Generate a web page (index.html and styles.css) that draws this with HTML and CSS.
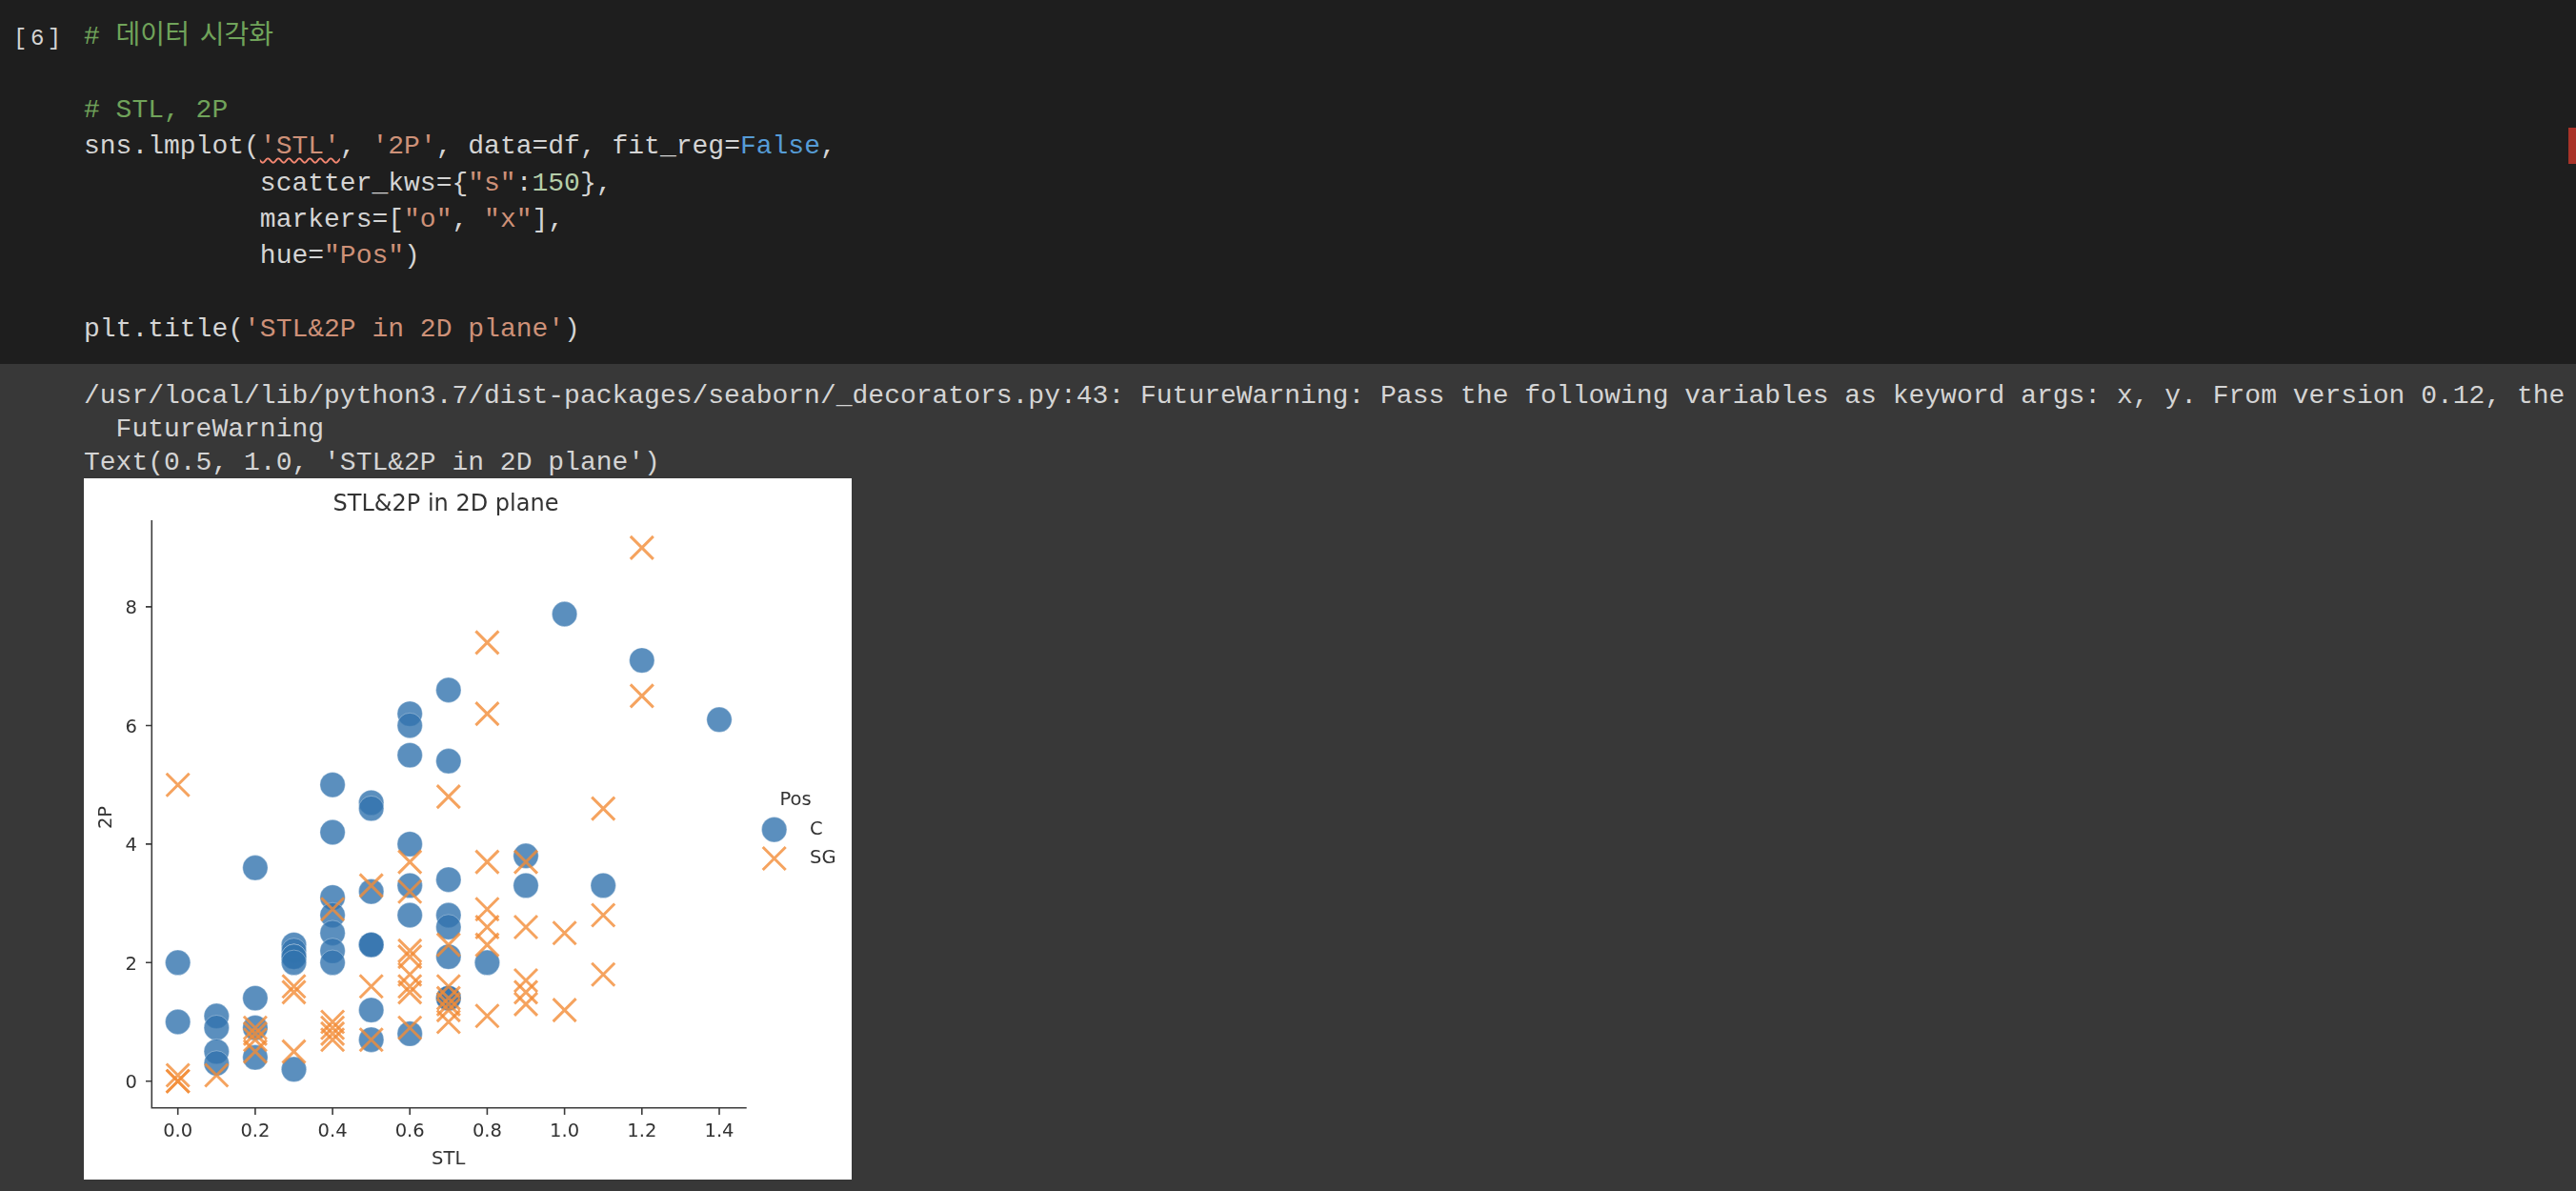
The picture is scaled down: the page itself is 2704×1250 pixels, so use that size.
FILE: index.html
```html
<!DOCTYPE html>
<html lang="ko">
<head>
<meta charset="utf-8">
<title>Notebook cell</title>
<link rel="stylesheet" href="styles.css">
</head>
<body>
<main class="cell">
  <section class="input">
    <div class="gutter">[6]</div>
    <pre class="code"><span class="cm"># <span class="ko">데이터 시각화</span></span>

<span class="cm"># STL, 2P</span>
sns.lmplot(<span class="str squiggle">'STL'</span>, <span class="str">'2P'</span>, data=df, fit_reg=<span class="kw">False</span>,
           scatter_kws={<span class="str">"s"</span>:<span class="num">150</span>},
           markers=[<span class="str">"o"</span>, <span class="str">"x"</span>],
           hue=<span class="str">"Pos"</span>)

plt.title(<span class="str">'STL&amp;2P in 2D plane'</span>)</pre>
    <div class="marker"></div>
  </section>
  <section class="output">
    <pre class="stream">/usr/local/lib/python3.7/dist-packages/seaborn/_decorators.py:43: FutureWarning: Pass the following variables as keyword args: x, y. From version 0.12, the
  FutureWarning
Text(0.5, 1.0, 'STL&amp;2P in 2D plane')</pre>
    <svg class="plot" width="806" height="736" viewBox="0 0 806 736" xmlns="http://www.w3.org/2000/svg">
      <defs>
        <path id="x" class="xm" d="M-12-12L12 12M-12 12L12-12"/>
      </defs>
      <rect class="bg" width="806" height="736"/>
      <text class="t title" x="380" y="34">STL&amp;2P in 2D plane</text>

      <path class="axis" d="M71.3 44V660.7H695.7"/>
      <path class="tick" d="M65 632.7H71.3M65 508.3H71.3M65 383.9H71.3M65 259.5H71.3M65 134.9H71.3M98.7 660.7V668M179.9 660.7V668M261.1 660.7V668M342.2 660.7V668M423.4 660.7V668M504.6 660.7V668M585.8 660.7V668M667 660.7V668"/>

      <g class="t ylab">
        <text x="56" y="640">0</text><text x="56" y="516">2</text><text x="56" y="391">4</text><text x="56" y="267">6</text><text x="56" y="142">8</text>
      </g>
      <g class="t xlab">
        <text x="98.7" y="691">0.0</text><text x="179.9" y="691">0.2</text><text x="261.1" y="691">0.4</text><text x="342.2" y="691">0.6</text><text x="423.4" y="691">0.8</text><text x="504.6" y="691">1.0</text><text x="585.8" y="691">1.2</text><text x="667" y="691">1.4</text>
      </g>
      <text class="t axl" x="382.7" y="720">STL</text>
      <text class="t axl" transform="translate(29 356) rotate(-90)">2P</text>

      <g class="dots">
        <circle r="13.2" cx="98.7" cy="508.3"/><circle r="13.2" cx="98.7" cy="570.5"/>
        <circle r="13.2" cx="139.3" cy="564.3"/><circle r="13.2" cx="139.3" cy="576.7"/><circle r="13.2" cx="139.3" cy="601.6"/><circle r="13.2" cx="139.3" cy="614"/>
        <circle r="13.2" cx="179.9" cy="408.8"/><circle r="13.2" cx="179.9" cy="545.6"/><circle r="13.2" cx="179.9" cy="576.7"/><circle r="13.2" cx="179.9" cy="607.8"/>
        <circle r="13.2" cx="220.5" cy="489.6"/><circle r="13.2" cx="220.5" cy="495.9"/><circle r="13.2" cx="220.5" cy="502.1"/><circle r="13.2" cx="220.5" cy="502.1"/><circle r="13.2" cx="220.5" cy="508.3"/><circle r="13.2" cx="220.5" cy="620.3"/>
        <circle r="13.2" cx="261.1" cy="321.7"/><circle r="13.2" cx="261.1" cy="371.5"/><circle r="13.2" cx="261.1" cy="439.9"/><circle r="13.2" cx="261.1" cy="458.5"/><circle r="13.2" cx="261.1" cy="477.2"/><circle r="13.2" cx="261.1" cy="495.9"/><circle r="13.2" cx="261.1" cy="508.3"/>
        <circle r="13.2" cx="301.7" cy="340.4"/><circle r="13.2" cx="301.7" cy="346.6"/><circle r="13.2" cx="301.7" cy="433.7"/><circle r="13.2" cx="301.7" cy="489.6"/><circle r="13.2" cx="301.7" cy="489.6"/><circle r="13.2" cx="301.7" cy="558.1"/><circle r="13.2" cx="301.7" cy="589.2"/>
        <circle r="13.2" cx="342.2" cy="247.1"/><circle r="13.2" cx="342.2" cy="259.5"/><circle r="13.2" cx="342.2" cy="290.6"/><circle r="13.2" cx="342.2" cy="383.9"/><circle r="13.2" cx="342.2" cy="427.4"/><circle r="13.2" cx="342.2" cy="458.5"/><circle r="13.2" cx="342.2" cy="582.9"/>
        <circle r="13.2" cx="382.8" cy="222.2"/><circle r="13.2" cx="382.8" cy="296.8"/><circle r="13.2" cx="382.8" cy="421.2"/><circle r="13.2" cx="382.8" cy="458.5"/><circle r="13.2" cx="382.8" cy="471"/><circle r="13.2" cx="382.8" cy="502.1"/><circle r="13.2" cx="382.8" cy="545.6"/><circle r="13.2" cx="382.8" cy="545.6"/>
        <circle r="13.2" cx="423.4" cy="508.3"/>
        <circle r="13.2" cx="464" cy="396.3"/><circle r="13.2" cx="464" cy="427.4"/>
        <circle r="13.2" cx="504.6" cy="142.5"/>
        <circle r="13.2" cx="545.2" cy="427.4"/>
        <circle r="13.2" cx="585.8" cy="191.1"/>
        <circle r="13.2" cx="667" cy="253.3"/>
        <circle r="13.2" cx="724.7" cy="368.7"/>
      </g>

      <g class="crosses">
        <use href="#x" x="98.7" y="321.7"/><use href="#x" x="98.7" y="626.5"/><use href="#x" x="98.7" y="632.7"/><use href="#x" x="98.7" y="632.7"/>
        <use href="#x" x="139.3" y="626.5"/>
        <use href="#x" x="179.9" y="576.7"/><use href="#x" x="179.9" y="582.9"/><use href="#x" x="179.9" y="589.2"/><use href="#x" x="179.9" y="601.6"/>
        <use href="#x" x="220.5" y="533.2"/><use href="#x" x="220.5" y="539.4"/><use href="#x" x="220.5" y="601.6"/>
        <use href="#x" x="261.1" y="452.3"/><use href="#x" x="261.1" y="570.5"/><use href="#x" x="261.1" y="576.7"/><use href="#x" x="261.1" y="582.9"/><use href="#x" x="261.1" y="589.2"/>
        <use href="#x" x="301.7" y="427.4"/><use href="#x" x="301.7" y="533.2"/><use href="#x" x="301.7" y="589.2"/>
        <use href="#x" x="342.2" y="402.6"/><use href="#x" x="342.2" y="433.7"/><use href="#x" x="342.2" y="495.9"/><use href="#x" x="342.2" y="502.1"/><use href="#x" x="342.2" y="520.7"/><use href="#x" x="342.2" y="533.2"/><use href="#x" x="342.2" y="539.4"/><use href="#x" x="342.2" y="576.7"/>
        <use href="#x" x="382.8" y="334.1"/><use href="#x" x="382.8" y="489.6"/><use href="#x" x="382.8" y="533.2"/><use href="#x" x="382.8" y="545.6"/><use href="#x" x="382.8" y="551.9"/><use href="#x" x="382.8" y="558.1"/><use href="#x" x="382.8" y="570.5"/>
        <use href="#x" x="423.4" y="172.4"/><use href="#x" x="423.4" y="247.1"/><use href="#x" x="423.4" y="402.6"/><use href="#x" x="423.4" y="452.3"/><use href="#x" x="423.4" y="471"/><use href="#x" x="423.4" y="489.6"/><use href="#x" x="423.4" y="564.3"/>
        <use href="#x" x="464" y="402.6"/><use href="#x" x="464" y="471"/><use href="#x" x="464" y="527"/><use href="#x" x="464" y="539.4"/><use href="#x" x="464" y="551.9"/>
        <use href="#x" x="504.6" y="477.2"/><use href="#x" x="504.6" y="558.1"/>
        <use href="#x" x="545.2" y="346.6"/><use href="#x" x="545.2" y="458.5"/><use href="#x" x="545.2" y="520.7"/>
        <use href="#x" x="585.8" y="72.9"/><use href="#x" x="585.8" y="228.4"/>
        <use href="#x" x="724.7" y="399"/>
      </g>

      <text class="t leg" x="747" y="343">Pos</text>
      <text class="t" x="762" y="374">C</text>
      <text class="t" x="762" y="404">SG</text>
    </svg>
  </section>
</main>
</body>
</html>
```
FILE: styles.css
```css
html, body {
  margin: 0;
  height: 100%;
  overflow: hidden;
  background: #383838;
}

.cell {
  display: flex;
  flex-direction: column;
}

pre {
  margin: 0;
  font-family: "Liberation Mono", monospace;
  font-size: 28px;
}

.input {
  position: relative;
  display: flex;
  height: 382px;
  box-sizing: border-box;
  background: #1e1e1e;
  color: #d4d4d4;
}

.gutter {
  width: 88px;
  box-sizing: border-box;
  padding: 24px 0 0 14px;
  font: 24px/34px "Liberation Mono", monospace;
  letter-spacing: 3.5px;
  color: #d4d4d4;
}

.code {
  padding-top: 15px;
  line-height: 38.4px;
}

.cm { color: #70a35a; }
.ko {
  font-family: "Noto Sans CJK KR", sans-serif;
  word-spacing: 3px;
}
.str { color: #ce9178; }
.kw { color: #569cd6; }
.num { color: #b5cea8; }

.squiggle {
  text-decoration: underline wavy #f48771;
  text-decoration-thickness: 1.5px;
  text-underline-offset: 4px;
}

.marker {
  position: absolute;
  top: 134px;
  right: 0;
  width: 8px;
  height: 38px;
  background: #a93228;
}

.output {
  padding: 16px 0 0 88px;
  color: #d4d4d4;
}

.stream {
  line-height: 35px;
}

.plot {
  display: block;
  margin-top: -1px;
}

.bg { fill: #fff; }

.plot text, .t text {
  font-family: "DejaVu Sans", sans-serif;
  font-size: 19.5px;
  fill: #333;
}

.plot .title {
  font-size: 24px;
  text-anchor: middle;
}

.ylab text { text-anchor: end; }
.xlab text, .plot .axl, .plot .leg { text-anchor: middle; }

.axis, .tick {
  fill: none;
  stroke: #3c3c3c;
  stroke-width: 1.6;
}

.dots, .crosses, .axis, .tick, .t { filter: blur(0.6px); }

.dots circle {
  fill: #3273ae;
  fill-opacity: 0.8;
  stroke: #fff;
  stroke-opacity: 0.4;
  stroke-width: 0.8;
}

.xm {
  fill: none;
  stroke: #f28c37;
  stroke-opacity: 0.8;
  stroke-width: 3;
}
```
